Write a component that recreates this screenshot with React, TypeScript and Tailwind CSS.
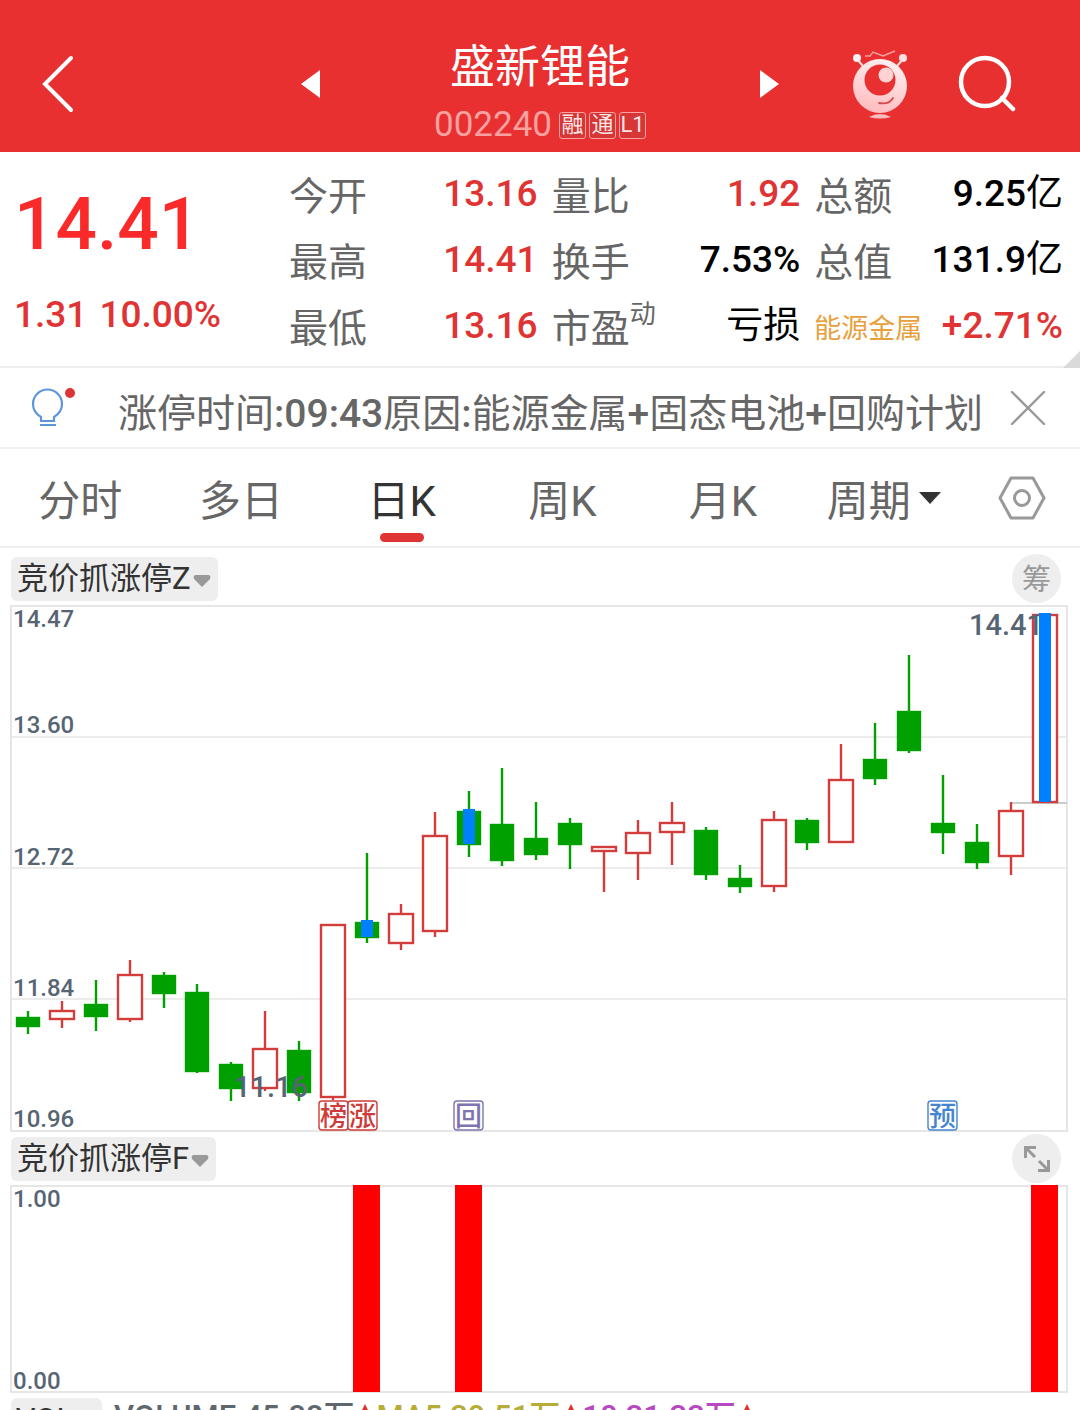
import { clsx } from "clsx";

type Candle = {
  up: boolean;
  high: number;
  top: number;
  bottom: number;
  low: number;
  signal?: boolean;
};

const up = (high: number, top: number, bottom: number, low: number, signal = false): Candle => ({
  up: true, high, top, bottom, low, signal,
});
const down = (high: number, top: number, bottom: number, low: number, signal = false): Candle => ({
  up: false, high, top, bottom, low, signal,
});

const candles: Candle[] = [
  down(11.76, 11.72, 11.66, 11.61),
  up(11.83, 11.76, 11.71, 11.65),
  down(11.97, 11.81, 11.73, 11.63),
  up(12.1, 12.0, 11.71, 11.69),
  down(12.02, 12.0, 11.88, 11.78),
  down(11.94, 11.89, 11.36, 11.35),
  down(11.42, 11.41, 11.25, 11.16),
  up(11.76, 11.51, 11.25, 11.23),
  down(11.56, 11.5, 11.22, 11.16),
  up(12.34, 12.34, 11.19, 11.17),
  down(12.82, 12.36, 12.26, 12.22, true),
  up(12.48, 12.41, 12.22, 12.17),
  up(13.09, 12.93, 12.3, 12.26),
  down(13.23, 13.1, 12.88, 12.79, true),
  down(13.39, 13.01, 12.77, 12.73),
  down(13.16, 12.92, 12.81, 12.77),
  down(13.05, 13.02, 12.88, 12.71),
  up(12.86, 12.86, 12.83, 12.56),
  up(13.04, 12.95, 12.82, 12.64),
  up(13.16, 13.02, 12.96, 12.74),
  down(12.99, 12.97, 12.68, 12.64),
  down(12.74, 12.65, 12.6, 12.55),
  up(13.1, 13.04, 12.6, 12.56),
  down(13.05, 13.04, 12.89, 12.84),
  up(13.55, 13.31, 12.89, 12.89),
  down(13.69, 13.45, 13.32, 13.27),
  down(14.14, 13.77, 13.51, 13.49),
  down(13.34, 13.02, 12.96, 12.81),
  down(13.01, 12.89, 12.76, 12.71),
  up(13.16, 13.1, 12.8, 12.67),
  up(14.41, 14.41, 13.16, 13.16, true),
];

const quotes = [
  { label: "今开", value: "13.16", color: "text-[#e03434]" },
  { label: "量比", value: "1.92", color: "text-[#e03434]" },
  { label: "总额", value: "9.25", unit: "亿", color: "text-black" },
  { label: "最高", value: "14.41", color: "text-[#e03434]" },
  { label: "换手", value: "7.53%", color: "text-black" },
  { label: "总值", value: "131.9", unit: "亿", color: "text-black" },
  { label: "最低", value: "13.16", color: "text-[#e03434]" },
  { label: "市盈", note: "动", value: "", unit: "亏损", color: "text-black" },
  { label: "能源金属", sector: true, value: "+2.71%", color: "text-[#e03434]" },
];

const tabs = ["分时", "多日", "日K", "周K", "月K"];

const events = [
  { text: "榜", x: 319, color: "#cf3b38" },
  { text: "涨", x: 348, color: "#cf3b38" },
  { text: "回", x: 454, color: "#7d74b0" },
  { text: "预", x: 928, color: "#4585cf" },
];

const volumes = [
  { text: "VOLUME:45.88万", color: "text-[#5f676e]" },
  { text: "MA5:39.51万", color: "text-[#b5ad38]" },
  { text: "10:31.33万", color: "text-[#b848c0]" },
];

const PRICE_MAX = 14.47;
const PRICE_MIN = 10.96;
const CHART_H = 525;

const candleX = (i: number) => Math.round(28 + i * 33.89);
const priceY = (p: number) =>
  1 + Math.round(((PRICE_MAX - p) / (PRICE_MAX - PRICE_MIN)) * CHART_H);

function CandleChart() {
  return (
    <svg viewBox="0 0 1080 527" className="block w-full overflow-visible" role="img" aria-label="日K">
      <g stroke="#e6e6e6" strokeWidth="2" fill="none">
        <rect x="11" y="1" width="1056" height="525" />
        <path d="M11 132H1067M11 263H1067M11 394H1067" strokeWidth="1.4" />
      </g>
      <path d="M1011 198H1067" stroke="#cccccc" strokeWidth="2" />
      {candles.map((c, i) => {
        const x = candleX(i);
        const top = priceY(c.top);
        const bottom = priceY(c.bottom);
        const color = c.up ? "#d23c3a" : "#00a000";
        return (
          <g key={i} stroke={color} strokeWidth="2.4">
            <path d={`M${x} ${priceY(c.high)}V${top}M${x} ${bottom}V${priceY(c.low)}`} />
            <rect
              x={c.up ? x - 12 : x - 11}
              y={c.up ? top : top + 1}
              width={c.up ? 24 : 22}
              height={c.up ? bottom - top : bottom - top - 1}
              fill={c.up ? "#ffffff" : color}
            />
          </g>
        );
      })}
      <g fill="#566573" fontSize="24" fontWeight="500">
        <text x="13" y="22">14.47</text>
        <text x="13" y="128">13.60</text>
        <text x="13" y="260">12.72</text>
        <text x="13" y="391">11.84</text>
        <text x="13" y="522">10.96</text>
      </g>
      <g fill="#566573" fontSize="29" fontWeight="500">
        <text x="234" y="492">11.16</text>
        <text x="969" y="30">14.41</text>
      </g>
      {candles.map((c, i) =>
        c.signal ? (
          <rect
            key={i}
            x={candleX(i) - 6}
            y={priceY(c.top) - 2}
            width="12"
            height={priceY(c.bottom) - priceY(c.top) + 2}
            fill="#0080ff"
          />
        ) : null,
      )}
      {events.map((e) => (
        <g key={e.text}>
          <rect x={e.x} y="496" width="29" height="29" rx="3" fill="#ffffff" stroke={e.color} strokeWidth="1.4" />
          <text x={e.x + 14.5} y="521" textAnchor="middle" fontSize="27" fontWeight="500" fill={e.color}>
            {e.text}
          </text>
        </g>
      ))}
    </svg>
  );
}

function SignalChart() {
  return (
    <svg viewBox="0 0 1080 208" className="block w-full overflow-visible" role="img" aria-label="竞价抓涨停F">
      <rect x="11" y="1" width="1056" height="206" fill="none" stroke="#e6e6e6" strokeWidth="2" />
      {candles.map((c, i) =>
        c.signal ? <rect key={i} x={candleX(i) - 14} y="0" width="27" height="207" fill="#ff0000" /> : null,
      )}
      <g fill="#566573" fontSize="24" fontWeight="500">
        <text x="13" y="22">1.00</text>
        <text x="13" y="204">0.00</text>
      </g>
    </svg>
  );
}

function IndicatorButton({ name }: { name: string }) {
  return (
    <button className="flex h-11 items-center rounded-md bg-[#eeeeee] pr-[5px] pl-[6px] text-[31px] leading-[44px] text-[#333333]">
      {name}
      <svg viewBox="0 0 18 12" className="mx-[2px] mt-1 h-3 w-[18px]" fill="#999999">
        <path d="M2 0H16Q18 1 17 4L9 12L1 4Q0 1 2 0Z" />
      </svg>
    </button>
  );
}

function RobotIcon() {
  return (
    <svg viewBox="0 0 56 70" className="h-[70px] w-14" fill="none">
      <defs>
        <linearGradient id="robot" x1="0.7" y1="0" x2="0.4" y2="1">
          <stop offset="0" stopColor="#fff1f1" />
          <stop offset="1" stopColor="#ffbcbf" />
        </linearGradient>
      </defs>
      <path d="M4 9L11 17M52 9L45 17" stroke="#ffe0e0" strokeWidth="2" />
      <circle cx="5" cy="9" r="4" fill="#fff0f0" />
      <circle cx="51" cy="9" r="4" fill="#ffe0e0" />
      <path d="M13 7H18L21 3L31 7L43 2" stroke="#f6a0a0" strokeWidth="1.4" />
      <circle cx="28" cy="37" r="27" fill="url(#robot)" />
      <circle cx="28" cy="31" r="15.500" fill="#e83030" />
      <circle cx="34" cy="26" r="7.500" fill="#ffd3d4" />
      <path d="M27 54Q37 56 41 49" stroke="#d94a4a" strokeWidth="1.8" strokeLinecap="round" />
      <path d="M17 68Q28 62 39 68Q28 71 17 68Z" fill="#ffbcbf" />
    </svg>
  );
}

function Header() {
  return (
    <header className="grid h-[152px] grid-cols-[1fr_478px_1fr] items-center bg-[#e83030] pt-4 text-white">
      <button aria-label="返回" className="ml-[41px] w-9">
        <svg viewBox="0 0 36 60" className="h-[60px] w-9" fill="none" stroke="#ffffff" strokeWidth="4" strokeLinecap="round">
          <path d="M30 4L4 30L30 56" />
        </svg>
      </button>
      <div className="flex items-center justify-between">
        <button aria-label="上一只">
          <svg viewBox="0 0 19 28" className="h-7 w-[19px]" fill="#ffffff">
            <path d="M19 0V28L0 14Z" />
          </svg>
        </button>
        <div className="pt-[22px] text-center">
          <h1 className="text-[45px] leading-[60px]">盛新锂能</h1>
          <div className="flex h-[54px] items-center gap-[3px] text-[#ffffffe6]">
            <span className="mr-1 text-[35px] leading-[54px] text-[#f9a0a0]">002240</span>
            {["融", "通", "L1"].map((tag) => (
              <span
                key={tag}
                className="flex size-[27px] items-center justify-center rounded-[3px] border border-[#f9a0a0] bg-[#d63636] text-[22px] leading-none"
              >
                {tag}
              </span>
            ))}
          </div>
        </div>
        <button aria-label="下一只">
          <svg viewBox="0 0 19 28" className="h-7 w-[19px]" fill="#ffffff">
            <path d="M0 0V28L19 14Z" />
          </svg>
        </button>
      </div>
      <div className="flex items-center justify-end gap-[50px] pr-16">
        <button aria-label="智能助手">
          <RobotIcon />
        </button>
        <button aria-label="搜索">
          <svg viewBox="0 0 58 58" className="size-[58px]" fill="none" stroke="#ffffff" strokeWidth="4.5" strokeLinecap="round">
            <circle cx="27" cy="27" r="24" />
            <path d="M44 43L55 54" />
          </svg>
        </button>
      </div>
    </header>
  );
}

function QuotePanel() {
  return (
    <section className="relative flex border-b-2 border-[#eeeeee] pt-[10px] pr-[17px] pb-[6px]">
      <div className="w-[289px] shrink-0 pl-[14px] font-medium">
        <p className="pt-5 text-[73px] leading-[84px] text-[#fa2a2a]">14.41</p>
        <p className="flex gap-3 pt-6 text-[37px] leading-[50px] text-[#e03434]">
          <span>1.31</span>
          <span>10.00%</span>
        </p>
      </div>
      <dl className="grid flex-1 grid-cols-3 gap-x-[14px]">
        {quotes.map((q) => (
          <div key={q.label} className="flex h-[66px] items-center justify-between whitespace-nowrap">
            <dt
              className={clsx(
                "flex pt-1 leading-[62px]",
                q.sector ? "text-[27px] text-[#e8a03c]" : "text-[39px] text-[#666666]",
              )}
            >
              {q.label}
              {q.note && <sup className="top-0 text-[26px] leading-[32px]">{q.note}</sup>}
            </dt>
            <dd className={clsx("pb-0.5 text-[37px] leading-[64px] font-medium", q.color)}>
              {q.value}
              {q.unit && <span className="font-normal">{q.unit}</span>}
            </dd>
          </div>
        ))}
      </dl>
      <svg viewBox="0 0 17 17" className="absolute right-0 -bottom-0.5 size-[17px]" fill="#dadada">
        <path d="M17 0V17H0Z" />
      </svg>
    </section>
  );
}

function Notice() {
  return (
    <section className="flex h-[81px] items-center border-b-2 border-[#f0f0f0] text-[#666666]">
      <svg viewBox="0 0 48 44" className="mt-1 ml-[30px] h-11 w-12 shrink-0" fill="none">
        <path
          d="M11 33V29Q3 24 3 16A14.500 14.500 0 0 1 32 16Q32 24 24 29V33ZM10 37H26"
          stroke="#5a96d8"
          strokeWidth="2.2"
        />
        <circle cx="40" cy="5" r="5" fill="#dc3535" />
      </svg>
      <p className="ml-10 flex-1 pt-3 text-[39px] leading-[64px] whitespace-nowrap">
        涨停时间<span className="font-medium">:09:43</span>原因<span className="font-medium">:</span>能源金属
        <span className="font-medium">+</span>固态电池<span className="font-medium">+</span>回购计划
      </p>
      <button aria-label="关闭" className="mr-[34px]">
        <svg viewBox="0 0 36 36" className="size-9" fill="none" stroke="#999999" strokeWidth="2.4" strokeLinecap="round">
          <path d="M2 2L34 34M34 2L2 34" />
        </svg>
      </button>
    </section>
  );
}

function PeriodTabs() {
  return (
    <nav className="flex h-[99px] border-b-2 border-[#eeeeee] text-[42px] leading-[60px] text-[#666666]">
      {tabs.map((tab) => {
        const isActive = tab === "日K";
        return (
          <button key={tab} className={clsx("relative flex-1 pt-2", isActive && "text-[#333333]")}>
            {tab}
            {isActive && (
              <span className="absolute bottom-1 left-1/2 h-[9px] w-11 -translate-x-1/2 rounded-full bg-[#e03434]" />
            )}
          </button>
        );
      })}
      <button className="flex flex-1 items-center justify-center gap-2">
        <span className="pt-2">周期</span>
        <svg viewBox="0 0 22 12" className="h-3 w-[22px]" fill="#333333">
          <path d="M0 0H22L11 12Z" />
        </svg>
      </button>
      <button aria-label="设置" className="flex w-[116px] items-center justify-center">
        <svg viewBox="0 0 48 44" className="h-11 w-12" fill="none" stroke="#999999" strokeWidth="3" strokeLinejoin="round">
          <path d="M13 2H35L46 22L35 42H13L2 22Z" />
          <circle cx="24" cy="22" r="7.500" />
        </svg>
      </button>
    </nav>
  );
}

export default function App() {
  return (
    <main className="h-screen overflow-hidden bg-white font-['Roboto','Noto_Sans_CJK_SC',sans-serif]">
      <Header />
      <QuotePanel />
      <Notice />
      <PeriodTabs />

      <div className="flex h-[57px] items-center justify-between pt-1 pr-[19px] pl-[11px]">
        <IndicatorButton name="竞价抓涨停Z" />
        <button className="flex size-[49px] items-center justify-center rounded-full bg-[#eeeeee] pt-1 text-[29px] leading-none text-[#999999]">
          筹
        </button>
      </div>
      <CandleChart />

      <div className="flex h-[53px] items-center justify-between pr-[19px] pl-[11px]">
        <IndicatorButton name="竞价抓涨停F" />
        <button aria-label="全屏" className="flex size-[49px] items-center justify-center rounded-full bg-[#eeeeee]">
          <svg viewBox="0 0 26 26" className="size-[26px]" fill="none" stroke="#999999" strokeWidth="3">
            <path d="M1.500 12V1.500H12M1.500 1.500L11 11M24.500 14V24.500H14M24.500 24.500L15 15" />
          </svg>
        </button>
      </div>
      <SignalChart />

      <div className="flex items-start gap-3 pt-[5px] pl-[11px]">
        <button className="h-11 w-[91px] rounded-md bg-[#eeeeee] pr-6 text-[31px] leading-[40px] text-[#333333]">VOL</button>
        <p className="flex text-[31px] leading-[38px] font-medium whitespace-nowrap">
          {volumes.map((v) => (
            <span key={v.text} className={clsx("flex", v.color)}>
              {v.text}
              <svg viewBox="0 0 10 24" className="mx-1.5 mt-[6px] h-6 w-[10px]" fill="#e03434">
                <path d="M5 0L10 10H6.500V24H3.500V10H0Z" />
              </svg>
            </span>
          ))}
        </p>
      </div>
    </main>
  );
}
